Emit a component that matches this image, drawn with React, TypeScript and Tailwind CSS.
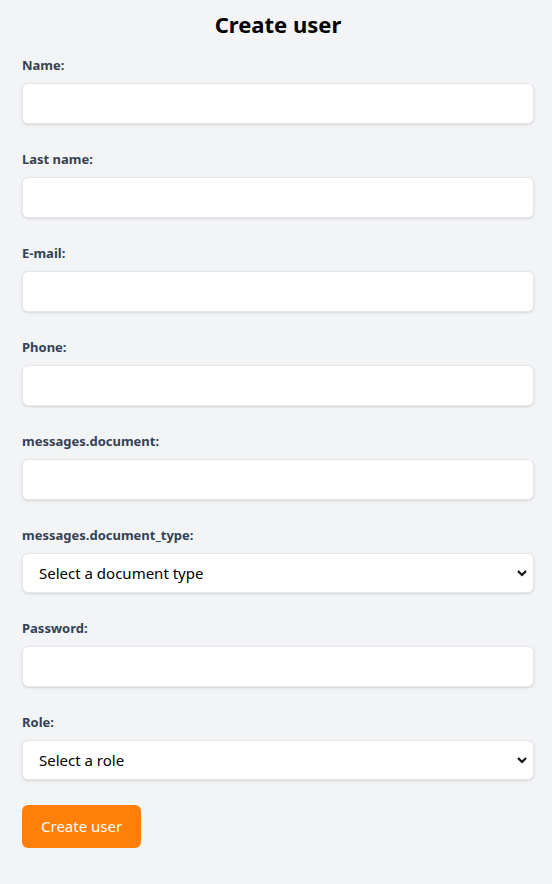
const font = { fontFamily: '"Noto Sans", "Open Sans", sans-serif' };

function Chevron() {
  return (
    <svg
      width="12"
      height="12"
      viewBox="0 0 12 12"
      className="pointer-events-none absolute right-[6px] top-1/2 -translate-y-1/2"
    >
      <path d="M2 4l4 4 4-4" fill="none" stroke="#111" strokeWidth="2.2" />
    </svg>
  );
}

function Field({ label, type = "text" }: { label: string; type?: string }) {
  return (
    <div className="mb-[25px]">
      <label className="mb-2 block text-[13px] leading-5 font-bold text-gray-700">{label}</label>
      <input
        type={type}
        className="block h-[41px] w-full rounded-md border border-gray-200 bg-white px-4 shadow-sm outline-none"
      />
    </div>
  );
}

function SelectField({ label, placeholder }: { label: string; placeholder: string }) {
  return (
    <div className="mb-[25px]">
      <label className="mb-2 block text-[13px] leading-5 font-bold text-gray-700">{label}</label>
      <div className="relative">
        <select className="block h-[40px] w-full appearance-none rounded-md border border-gray-200 bg-white pl-4 pr-8 text-[15px] text-black shadow-sm outline-none">
          <option>{placeholder}</option>
        </select>
        <Chevron />
      </div>
    </div>
  );
}

export default function App() {
  return (
    <div className="min-h-[884px] bg-gray-100 pl-[22px] pr-[18px] pt-2" style={font}>
      <h1 className="mb-[15px] text-center text-[22px] leading-8 font-bold text-black">Create user</h1>
      <form onSubmit={(e) => e.preventDefault()}>
        <Field label="Name:" />
        <Field label="Last name:" />
        <Field label="E-mail:" type="email" />
        <Field label="Phone:" />
        <Field label="messages.document:" />
        <SelectField label="messages.document_type:" placeholder="Select a document type" />
        <Field label="Password:" type="password" />
        <SelectField label="Role:" placeholder="Select a role" />
        <button
          type="submit"
          className="h-[43px] rounded-md bg-[#ff7f0a] px-[19px] text-[15px] text-white"
        >
          Create user
        </button>
      </form>
    </div>
  );
}
